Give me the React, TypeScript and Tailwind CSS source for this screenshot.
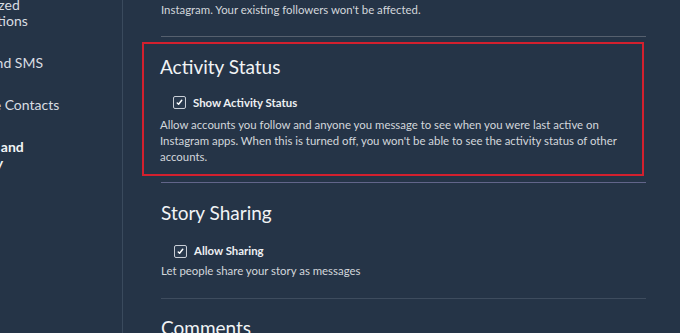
import React from "react";

function Check({ label }: { label: string }) {
  return (
    <div className="flex h-[16px] items-center gap-[7px] pl-[13px]">
      <span className="flex h-[13px] w-[13px] items-center justify-center rounded-[2px] border border-[#c9ced6] bg-[#2a3a4e]">
        <svg viewBox="0 0 10 10" className="h-[9px] w-[9px]">
          <path d="M2.5 5.5 L4 7 L7.5 2.5" fill="none" stroke="#ffffff" strokeWidth="1.6" strokeLinecap="round" strokeLinejoin="round" />
        </svg>
      </span>
      <span className="text-[11.4px] font-bold leading-[16px] text-[#eef0f3]">{label}</span>
    </div>
  );
}

export default function App() {
  const sidebar = [
    { lines: ["Authorized", "Applications"], bold: false },
    { lines: ["Email and SMS"], bold: false },
    { lines: ["Manage Contacts"], bold: false },
    { lines: ["Privacy and", "Security"], bold: true },
  ];
  return (
    <div
      className="flex h-[333px] w-[680px] overflow-hidden bg-[#253447] text-[#e6e9ed]"
      style={{ fontFamily: 'Lato, "Open Sans", sans-serif' }}
    >
      <div className="w-[123px] shrink-0 overflow-hidden border-r border-[#3a4a5d]">
        <div className="ml-[-48px] mt-[-3px] flex flex-col gap-[26px]">
          {sidebar.map((it, i) => (
            <div
              key={i}
              className={`whitespace-nowrap text-[14px] leading-[16px] ${it.bold ? "font-bold text-[#f2f4f6]" : "text-[#d9dde2]"}`}
            >
              {it.lines.map((l) => (
                <div key={l}>{l}</div>
              ))}
            </div>
          ))}
        </div>
      </div>
      <div className="w-[523px] shrink-0 pl-[38px]">
        <p className="mt-[-14px] whitespace-nowrap text-[11.4px] leading-[16px] text-[#d3d7dc]">
          When your account is private, only people you approve can see your photos and videos on
          <br />
          Instagram. Your existing followers won't be affected.
        </p>
        <div className="mt-[18px] h-px w-[485px] bg-[#56606e]" />
        <div className="ml-[-19px] mt-[5px] h-[134px] w-[502px] border-[2.5px] border-[#d3202e] pl-[16px] pt-[8.5px]">
          <h2 className="text-[19px] leading-[28px] text-[#f1f3f5]">Activity Status</h2>
          <div className="mt-[14px]">
            <Check label="Show Activity Status" />
          </div>
          <p className="mt-[6px] whitespace-nowrap text-[11.4px] leading-[16px] text-[#d3d7dc]">
            Allow accounts you follow and anyone you message to see when you were last active on
            <br />
            Instagram apps. When this is turned off, you won't be able to see the activity status of other
            <br />
            accounts.
          </p>
        </div>
        <div className="mt-[6px] h-px w-[485px] bg-[#62658a]" />
        <h2 className="mt-[16px] text-[19px] leading-[28px] text-[#f1f3f5]">Story Sharing</h2>
        <div className="mt-[16px]">
          <Check label="Allow Sharing" />
        </div>
        <p className="mt-[4px] text-[11.4px] leading-[16px] text-[#d3d7dc]">
          Let people share your story as messages
        </p>
        <div className="mt-[19px] h-px w-[485px] bg-[#3e4c5e]" />
        <h2 className="mt-[15px] text-[19px] leading-[28px] text-[#f1f3f5]">Comments</h2>
      </div>
    </div>
  );
}
